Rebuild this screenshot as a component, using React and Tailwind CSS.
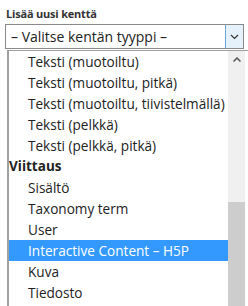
export default function App() {
  const options = [
    { label: 'Teksti (muotoiltu)' },
    { label: 'Teksti (muotoiltu, pitkä)' },
    { label: 'Teksti (muotoiltu, tiivistelmällä)' },
    { label: 'Teksti (pelkkä)' },
    { label: 'Teksti (pelkkä, pitkä)' },
    { label: 'Viittaus', group: true },
    { label: 'Sisältö' },
    { label: 'Taxonomy term' },
    { label: 'User' },
    { label: 'Interactive Content – H5P', selected: true },
    { label: 'Kuva' },
    { label: 'Tiedosto' },
  ];

  return (
    <div className="h-[306px] w-[248px] overflow-hidden bg-white font-['Open_Sans',sans-serif] text-[#333]">
      <div className="pl-[6px] pt-[6px] text-[11px] font-bold leading-[15px] tracking-[-0.2px] text-[#333]">
        Lisää uusi kenttä
      </div>

      <div className="ml-[5px] mt-[3px] flex h-[25px] w-[239px] border border-[#8a8a8a] bg-white">
        <div className="flex-1 whitespace-nowrap pl-[5px] text-[14px] leading-[23px] text-[#222]">
          – Valitse kentän tyyppi –
        </div>
        <div className="flex w-[18px] items-center justify-center border-l border-[#6fa6d6] bg-[#e5f1fb]">
          <svg width="9" height="6" viewBox="0 0 9 6">
            <path d="M1 1l3.5 3.5L8 1" fill="none" stroke="#333" strokeWidth="1.2" />
          </svg>
        </div>
      </div>

      <div className="ml-[7px] mt-[1px] flex h-[260px] border-l-2 border-t border-[#a0a0a0] bg-white">
        <div className="min-w-0 flex-1 overflow-hidden">
          {options.map((o) =>
            o.group ? (
              <div key={o.label} className="h-[21px] whitespace-nowrap text-[13.5px] font-bold leading-[21px] text-[#222]">
                {o.label}
              </div>
            ) : (
              <div
                key={o.label}
                className={
                  o.selected
                    ? 'h-[21px] whitespace-nowrap bg-[#3399ff] pl-[19px] text-[13.6px] leading-[21px] text-white'
                    : 'h-[21px] whitespace-nowrap pl-[19px] text-[13.6px] leading-[21px] text-[#222]'
                }
              >
                {o.label}
              </div>
            )
          )}
        </div>
        <div className="flex w-[17px] shrink-0 flex-col bg-[#f0f0f0]">
          <div className="flex h-[17px] items-center justify-center">
            <svg width="8" height="5" viewBox="0 0 8 5">
              <path d="M0.5 4.5L4 1l3.5 3.5" fill="none" stroke="#555" strokeWidth="1.5" />
            </svg>
          </div>
          <div className="mt-[134px] flex-1 bg-[#cdcdcd]" />
        </div>
        <div className="w-[3px] shrink-0 bg-white" />
      </div>
    </div>
  );
}
